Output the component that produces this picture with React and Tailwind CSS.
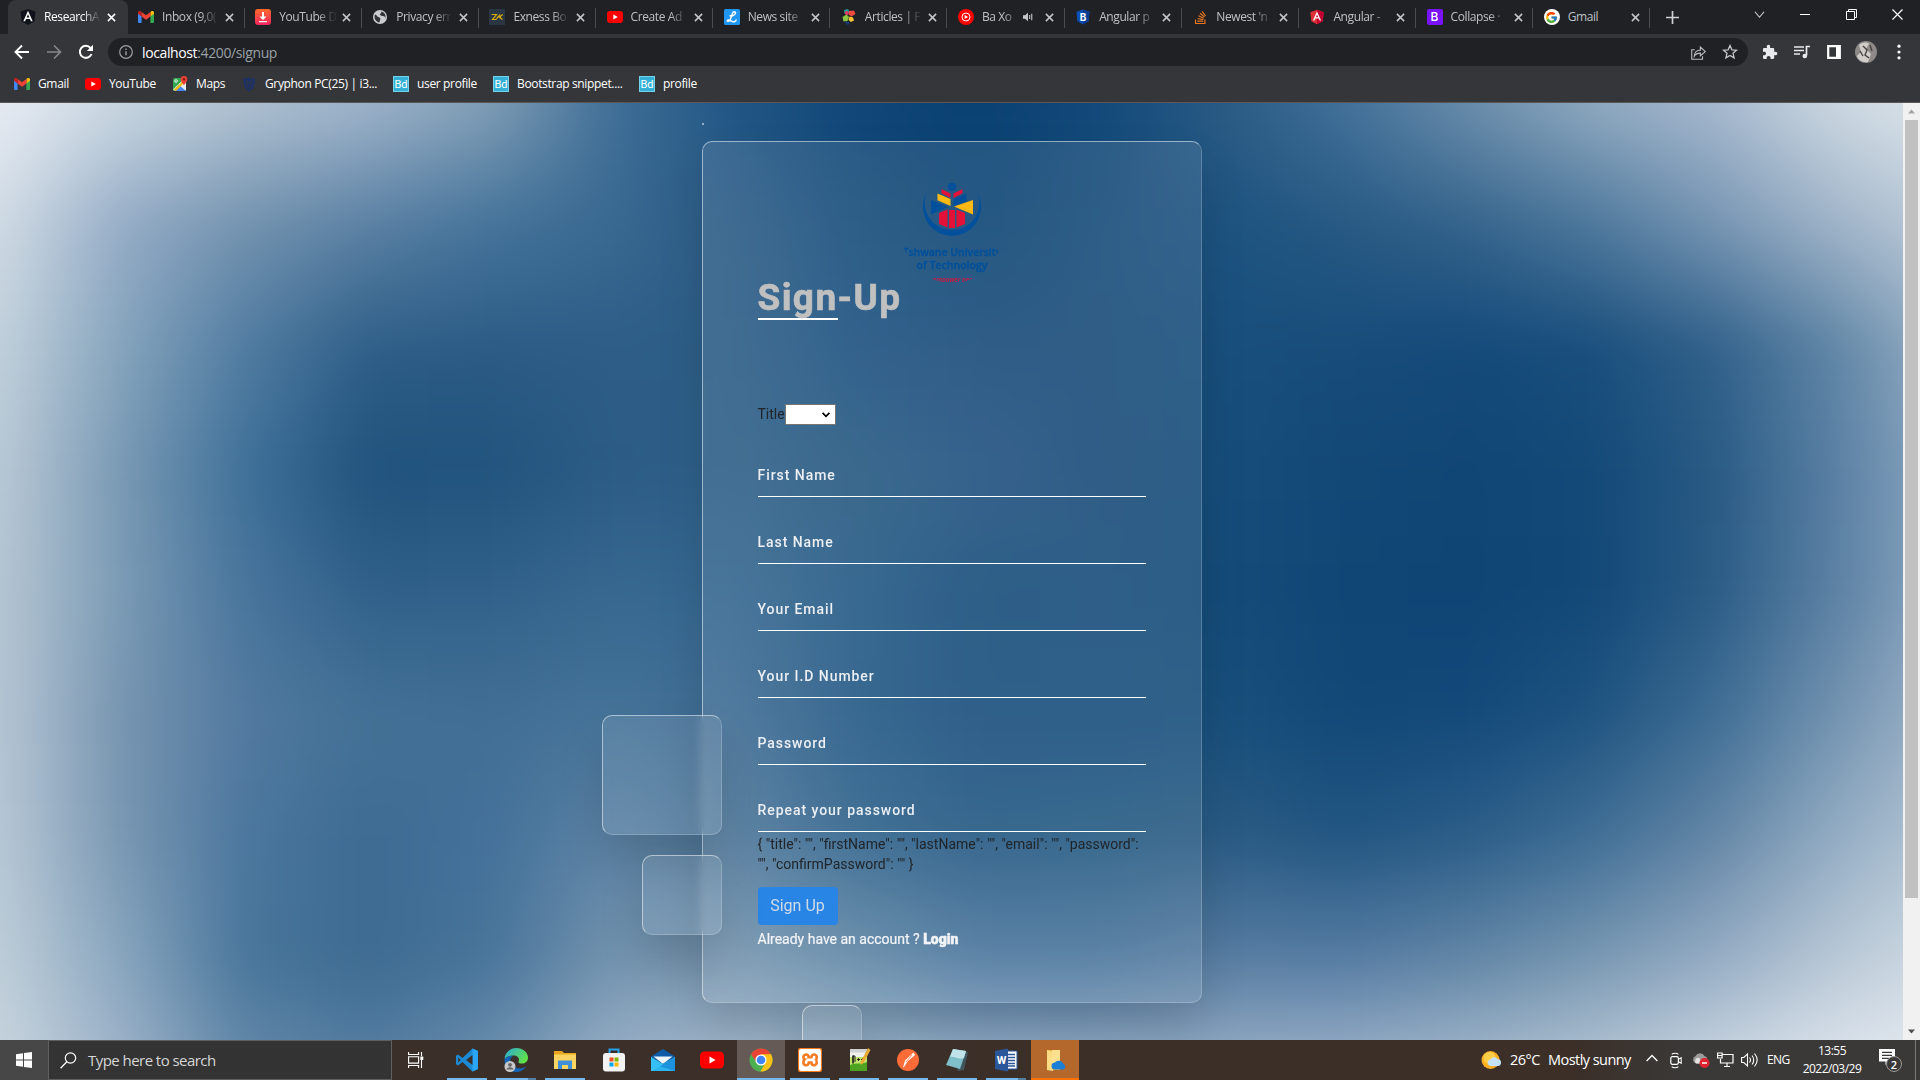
import React from "react";
import { FcGoogle } from "react-icons/fc";
import { FaStackOverflow } from "react-icons/fa";
import { SiXampp } from "react-icons/si";

const MESH = [
  ["#e8ecf4", "#c8d6e0", "#b0c1d1", "#9eb3ca", "#819eb6", "#406f97", "#205584", "#0f4578", "#0a4173", "#12497a", "#2a5b84", "#43719a", "#6a8dab", "#8fa9c0", "#a6b8ce", "#ccd8e1", "#dfe6ec"],
  ["#d0dbe4", "#94abc6", "#7292ae", "#5a80a3", "#44739a", "#396890", "#2a5b85", "#154c7a", "#0b4574", "#184c7a", "#1d5380", "#265983", "#34638b", "#4c779b", "#7594b2", "#9fb3c8", "#c0cedb"],
  ["#c2d1dc", "#84a3bc", "#507ba1", "#2e5e87", "#2c5b85", "#2e5e87", "#2c5d86", "#1b5080", "#184a7a", "#184b79", "#184f7c", "#184c7a", "#13497a", "#194e7c", "#30608a", "#6086a6", "#9fb4c9"],
  ["#bac9d6", "#7898b3", "#3e7098", "#1f527d", "#20537e", "#2c5c86", "#2e5f87", "#255880", "#205280", "#184a79", "#164d7a", "#124876", "#104675", "#134978", "#285a84", "#5a80a4", "#93adc5"],
  ["#b6c6d3", "#7a9ab4", "#48749c", "#306089", "#31618a", "#38688f", "#346690", "#225884", "#154c79", "#184d7b", "#144b79", "#0f4675", "#0f4575", "#124877", "#2a5b85", "#5c81a4", "#93adc5"],
  ["#b6c6d4", "#7694b0", "#52799f", "#437196", "#416e94", "#457399", "#3e6b93", "#215784", "#184e7c", "#174e7c", "#184f7b", "#124877", "#13497a", "#1e5380", "#3e6d94", "#7393b0", "#a4b7cc"],
  ["#b8c8d6", "#7896b1", "#4b769e", "#3d6b92", "#43719a", "#5d83a5", "#4c7699", "#2d618b", "#215681", "#235982", "#2a5b84", "#215581", "#2b5d88", "#3f6e95", "#6486a6", "#93adc4", "#b9c9d6"],
  ["#bfced9", "#88a5be", "#48759a", "#3d6b91", "#48749a", "#7393ae", "#7695b0", "#5f86a5", "#4a759d", "#49759c", "#587da2", "#567ca3", "#6286a6", "#7897b2", "#95acc4", "#b9c8d6", "#d3dde6"],
  ["#cbd7e0", "#a2b5cb", "#688cac", "#587fa3", "#7093b1", "#a0b5cc", "#adc0d1", "#a8bdd0", "#a4b8ce", "#a2b6cc", "#a2b6cc", "#a6b8ce", "#aec0d2", "#bccbd8", "#d2dce5", "#e4eaf1", "#eaeef4"],
];

const STEP = 122.45;
const SUB = 10;
const channels = (hex) => [1, 3, 5].map((k) => parseInt(hex.slice(k, k + 2), 16));
const MESH_RGB = MESH.map((row) => row.map(channels));

function meshBand(t) {
  const r = Math.min(Math.floor(t), MESH_RGB.length - 2);
  const f = t - r;
  const stops = MESH_RGB[r].map((a, i) => {
    const b = MESH_RGB[r + 1][i];
    const c = a.map((v, k) => Math.round(v + (b[k] - v) * f));
    return "rgb(" + c.join(",") + ") " + (200 + i * STEP) + "px";
  });
  return "linear-gradient(to right," + stops.join(",") + ")";
}

const BANDS = Array.from({ length: (MESH.length - 1) * SUB + 1 }, (_, i) => meshBand(i / SUB));

function GradientBackdrop() {
  return (
    <div className="absolute -left-[200px] -top-[106px] flex w-[2360px] flex-col blur-[22px]">
      {BANDS.map((g, i) => (
        <div key={i} className="h-[12.245px] shrink-0 first:h-[112px] last:h-[120px]" style={{ backgroundImage: g }} />
      ))}
    </div>
  );
}

/* ---------- favicons ---------- */
const GmailIcon = () => (
  <svg viewBox="0 0 16 12" className="h-3 w-4">
    <path d="M0 1.5V11a1 1 0 0 0 1 1h2.6V5z" fill="#4285f4" />
    <path d="M12.4 5v7H15a1 1 0 0 0 1-1V1.5z" fill="#34a853" />
    <path d="M12.4 1v4.5L16 2.8V1.5C16 0 14.300-.5 13.300.3z" fill="#fbbc04" />
    <path d="M3.600 5.500V1L8 4.300 12.400 1v4.500L8 8.800z" fill="#ea4335" />
    <path d="M0 1.500v1.300l3.600 2.700V1L2.700.3C1.700-.5 0 0 0 1.500z" fill="#c5221f" />
  </svg>
);
const YtIcon = () => (
  <svg viewBox="0 0 16 12" className="h-3 w-4">
    <rect width="16" height="12" rx="3" fill="#f00" />
    <path d="M6.300 3.400v5.200L10.800 6z" fill="#fff" />
  </svg>
);
const AngularDark = () => (
  <svg viewBox="0 0 16 16" className="size-4">
    <path d="M8 0l7.500 2.600-1.100 10L8 16l-6.400-3.400-1.100-10z" fill="#10131c" />
    <path d="M8 1.800L3.300 12.300h1.800l.9-2.300h4l.9 2.300h1.800zm1.400 6.700H6.600L8 5.200z" fill="#fff" />
  </svg>
);
const DownloadIcon = () => (
  <svg viewBox="0 0 16 16" className="size-4">
    <defs>
      <linearGradient id="dl" x2="0" y2="1"><stop stopColor="#ff6a2b" /><stop offset="1" stopColor="#f0265f" /></linearGradient>
    </defs>
    <rect width="16" height="16" rx="3" fill="url(#dl)" />
    <path d="M7 3h2v4.500h2.500L8 11 4.500 7.500H7zM4 12h8v1.300H4z" fill="#fff" />
  </svg>
);
const GlobeIcon = () => (
  <svg viewBox="0 0 16 16" className="size-4">
    <circle cx="8" cy="8" r="7" fill="#c9cccf" />
    <path d="M3 5.500C5 6 5 8 7.500 8.500 9 9 8 11 7.500 13.500 4 13 1.500 9.500 3 5.500zM8 2.500c2 0 1.500 2 .3 2.300C7 5.500 9 7 11 7c1.500 0 2.500 1 2 3 1.500-3 0-7.500-5-7.500z" fill="#303236" />
  </svg>
);
const ExnessIcon = () => (
  <svg viewBox="0 0 16 16" className="size-4">
    <rect width="16" height="16" fill="#2a3742" />
    <path d="M2.500 5.500h5L3.500 10.500H7L11 5.500M8 8h4M13.800 5.500l-3.600 2.500 3.300 2.500" stroke="#d9ac0c" strokeWidth="1.200" fill="none" />
  </svg>
);
const NewsIcon = () => (
  <svg viewBox="0 0 16 16" className="size-4">
    <rect width="16" height="16" rx="1.500" fill="#1f96f3" />
    <path d="M11.500 4.500C11.800 2.500 9.500 2.200 8.500 4.300 7.300 7 7.300 10 5.200 11.800c-1.300 1-2.500.2-1.500-.7 1.500-1.200 4 2.400 6.800 1.600 1.200-.4 1.700-1.300 1.700-2.200M5.800 6.200c.5 1.600 3.500 1 5.700-1.700" fill="none" stroke="#fff" strokeWidth="1.500" />
  </svg>
);
const PinwheelIcon = () => (
  <svg viewBox="0 0 16 16" className="size-4">
    <path d="M3 1l4-1 1.500 3L6 5.500 3.500 4.500z" fill="#17a398" />
    <path d="M8 2l5-.5 1.500 3.500-4 2.500-3-2z" fill="#f04a3e" />
    <circle cx="5.800" cy="4" r="1.900" fill="#e8356b" />
    <path d="M1.500 8l4-2.500L8 8l-1.500 4-4 .5z" fill="#8bc53f" />
    <path d="M8.500 7.500l3.500 1 1 3-3 1.500-2.500-2z" fill="#fbc531" />
    <path d="M3 12.500l5 .5 1 2-3 1z" fill="#163a6b" />
  </svg>
);
const YtMusic = () => (
  <svg viewBox="0 0 16 16" className="size-4">
    <circle cx="8" cy="8" r="8" fill="#f00" />
    <circle cx="8" cy="8" r="4" fill="none" stroke="#fff" strokeWidth="1" />
    <path d="M6.600 5.900v4.200L10.200 8z" fill="#fff" />
  </svg>
);
const BShield = () => (
  <svg viewBox="0 0 16 16" className="size-4">
    <path d="M8 .5l6.500 2.200-.8 9.300L8 15.500 2.300 12l-.8-9.300z" fill="#0b4fb3" />
    <path d="M8 .5l6.500 2.200-.8 9.300L8 15.500z" fill="#083d92" />
    <text x="8" y="11.500" textAnchor="middle" fontSize="10" fontWeight="700" fontFamily="Inter, sans-serif" fill="#fff">B</text>
  </svg>
);
const AngularRed = () => (
  <svg viewBox="0 0 16 16" className="size-4">
    <path d="M8 .8l6.700 2.400-1 9L8 15.300l-5.700-3.100-1-9z" fill="#dd3038" />
    <path d="M8 .8l6.700 2.400-1 9L8 15.300z" fill="#c3002f" />
    <path d="M8 2.500L3.900 11.600h1.500l.9-2h3.400l.9 2h1.500zm1.200 5.800H6.800L8 5.400z" fill="#fff" />
  </svg>
);
const BPurple = () => (
  <span className="flex size-4 items-center justify-center rounded-[2px] bg-[#7a12f8] font-[Inter,sans-serif] text-[12px] font-medium text-white">B</span>
);
const GoogleRound = () => (
  <span className="flex size-4 items-center justify-center rounded-full bg-white"><FcGoogle size={13} /></span>
);
const MapsIcon = () => (
  <svg viewBox="0 0 16 16" className="size-4">
    <rect x="1" y="2" width="13" height="13" rx="1.500" fill="#34a853" />
    <path d="M1 13.500L12 3l2 2v8.500a1.500 1.500 0 0 1-1.500 1.500h-10z" fill="#e8eaed" />
    <path d="M7 9l7 6H2z" fill="#4285f4" />
    <path d="M1.500 14L12 4l1.500 1.500L4 15z" fill="#fbbc04" />
    <path d="M12 0a3.300 3.300 0 0 0-3.300 3.300C8.700 6 12 9 12 9s3.300-3 3.300-5.700A3.300 3.300 0 0 0 12 0z" fill="#ea4335" />
    <circle cx="12" cy="3.300" r="1.200" fill="#8d1a12" />
    <circle cx="4" cy="5" r="1.300" fill="none" stroke="#fff" strokeWidth=".9" />
  </svg>
);
const GryphonIcon = () => (
  <svg viewBox="0 0 16 16" className="size-4">
    <path d="M2 2l2 1V1.500L6 3l2-2 2 2 2-1.500V3l2-1-.5 4 1 1-1.500 2-.5 3L8 15.500 4 12l-.5-3L2 7l1-1z" fill="#1c3266" />
    <path d="M5 5l3 2 3-2-1 5-2 3-2-3z" fill="none" stroke="#35363a" strokeWidth=".9" />
  </svg>
);
const BdIcon = () => (
  <span className="flex size-4 items-center justify-center border border-[#76d2ea] bg-[#35b1d6] font-[Roboto,sans-serif] text-[11px] leading-none text-white">Bd</span>
);

const TABS = [
  { icon: AngularDark, title: "ResearchA", active: true },
  { icon: GmailIcon, title: "Inbox (9,0(" },
  { icon: DownloadIcon, title: "YouTube D" },
  { icon: GlobeIcon, title: "Privacy err" },
  { icon: ExnessIcon, title: "Exness Bo" },
  { icon: YtIcon, title: "Create Ad" },
  { icon: NewsIcon, title: "News site" },
  { icon: PinwheelIcon, title: "Articles | F" },
  { icon: YtMusic, title: "Ba Xo", audio: true },
  { icon: BShield, title: "Angular p" },
  { icon: () => <FaStackOverflow size={15} color="#e8761f" />, title: "Newest 'n" },
  { icon: AngularRed, title: "Angular -" },
  { icon: BPurple, title: "Collapse ·" },
  { icon: GoogleRound, title: "Gmail", full: true },
];

const BOOKMARKS = [
  { icon: GmailIcon, label: "Gmail", w: "w-[71px]" },
  { icon: YtIcon, label: "YouTube", w: "w-[87px]" },
  { icon: MapsIcon, label: "Maps", w: "w-[69px]" },
  { icon: GryphonIcon, label: "Gryphon PC(25) | i3...", w: "w-[152px]" },
  { icon: BdIcon, label: "user profile", w: "w-[100px]" },
  { icon: BdIcon, label: "Bootstrap snippet....", w: "w-[146px]" },
  { icon: BdIcon, label: "profile", w: "w-[80px]" },
];

const CloseX = ({ color }) => (
  <svg viewBox="0 0 10 10" className="size-[9px] shrink-0"><path d="M1 1l8 8M9 1l-8 8" stroke={color} strokeWidth="1.700" /></svg>
);

function TabStrip() {
  return (
    <div className="flex h-[34px] bg-[#202124] pl-[8px]">
      {TABS.map(({ icon: Icon, title, active, audio, full }, i) => (
        <div key={i} className={active ? "flex h-[34px] w-[119.500px] shrink-0 items-center rounded-t-lg bg-[#35363a] pl-[12px]" : "relative flex h-[34px] w-[117.150px] shrink-0 items-center pl-[10.500px]"}>
          <span className="flex size-4 shrink-0 items-center justify-center"><Icon /></span>
          <span className={(active ? "text-white " : "text-[#bdc1c6] ") + (audio ? "w-[31px] " : "w-[57px] ") + (full ? "" : audio ? "[mask-image:linear-gradient(to_right,#000_70%,rgba(0,0,0,.4))] " : "[mask-image:linear-gradient(to_right,#000_68%,rgba(0,0,0,.12)_95%)] ") + "ml-2 whitespace-nowrap text-[12px] tracking-[-0.4px]"}>{title}</span>
          {audio && (
            <svg viewBox="0 0 12 12" className="ml-[10px] mr-[6px] size-[10px] shrink-0"><path d="M0 4h2.500L6 1v10L2.500 8H0z" fill="#c4c7ca" /><path d="M8 3.500v5M10.500 2v8" stroke="#c4c7ca" strokeWidth="1.300" /></svg>
          )}
          <span className="ml-[6px] flex"><CloseX color={active ? "#fff" : "#c4c7ca"} /></span>
          {!active && <span className="absolute right-0 top-2 h-5 w-px bg-[#4a4c50]" />}
        </div>
      ))}
      <div className="ml-[16px] flex items-center">
        <svg viewBox="0 0 14 14" className="size-[13px]"><path d="M7 0v14M0 7h14" stroke="#d0d2d5" strokeWidth="1.800" /></svg>
      </div>
      <div className="ml-auto flex h-7 items-center text-white">
        <svg viewBox="0 0 12 12" className="mr-[35px] size-[11px]"><path d="M1 3l5 6 5-6" fill="none" stroke="#d5d5d5" strokeWidth="1.200" /></svg>
        <svg viewBox="0 0 10 10" className="mr-[36px] size-[10px]"><path d="M0 5.500h10" stroke="#fff" /></svg>
        <svg viewBox="0 0 11 11" className="mr-[35px] size-[11px]"><path d="M.5 2.500h8v8h-8zM2.500 2.500v-2h8v8h-2" fill="none" stroke="#fff" /></svg>
        <svg viewBox="0 0 11 11" className="mr-[17px] size-[11px]"><path d="M.5.5l10 10M10.500.5l-10 10" stroke="#fff" strokeWidth="1.200" /></svg>
      </div>
    </div>
  );
}

function Toolbar() {
  return (
    <div className="flex h-9 items-center bg-[#35363a] pl-[14px]">
      <svg viewBox="0 0 16 16" className="size-4"><path d="M15 8H2M8 1.500L1.500 8 8 14.500" fill="none" stroke="#fff" strokeWidth="1.900" /></svg>
      <svg viewBox="0 0 16 16" className="ml-4 size-4"><path d="M1 8h13M8 1.500L14.500 8 8 14.500" fill="none" stroke="#85878a" strokeWidth="1.700" /></svg>
      <svg viewBox="0 0 16 16" className="ml-4 size-4"><path d="M13.500 10A6 6 0 1 1 12.500 4" fill="none" stroke="#fff" strokeWidth="2" /><path d="M15 .8V7H8.800z" fill="#fff" /></svg>
      <div className="ml-[14px] flex h-7 w-[1640px] items-center rounded-full bg-[#202124] pl-[11px] pr-[10px]">
        <svg viewBox="0 0 14 14" className="size-[14px]"><circle cx="7" cy="7" r="6.300" fill="none" stroke="#9aa0a6" strokeWidth="1.200" /><path d="M7 6.200v4M7 3.500V5" stroke="#9aa0a6" strokeWidth="1.400" /></svg>
        <span className="ml-[9px] text-[14px] tracking-[-0.38px] text-[#9aa0a6]"><span className="text-white">localhost</span>:4200/signup</span>
        <svg viewBox="0 0 16 16" className="ml-auto size-[15px]"><path d="M4 5H.800v10.200h11.500V12M3.500 12c0-4.500 3-6.500 6.500-6.500V2.200L15.200 7 10 11.500V8.700C7 8.700 5 9.500 3.500 12z" fill="none" stroke="#b9bcc0" strokeWidth="1.200" /></svg>
        <svg viewBox="0 0 16 16" className="ml-4 size-[16px]"><path d="M8 1.500l1.900 4.300 4.600.4-3.500 3.100 1.100 4.600L8 11.500l-4.100 2.400L5 9.300 1.500 6.200l4.600-.4z" fill="none" stroke="#c6c9cc" strokeWidth="1.300" /></svg>
      </div>
      <svg viewBox="0 0 16 16" className="ml-[14px] size-[16px]"><path d="M1 5.200C1 4.500 1.500 4 2.200 4H5c-.7-2 0-3.300 1.500-3.300S8.700 2 8 4h3c.7 0 1.200.5 1.200 1.200V8c2-.7 3.100.1 3.100 1.600s-1.100 2.200-3.100 1.500v2.700c0 .7-.5 1.200-1.200 1.200H8.500c.5-2-.5-3-1.900-3s-2.300 1-1.900 3H2.200C1.500 15 1 14.500 1 13.800v-2.600c2 .4 3-.4 3-1.700S3 7.500 1 8z" fill="#e8eaed" /></svg>
      <svg viewBox="0 0 16 16" className="ml-[16px] size-[16px]"><path d="M0 3h10M0 6.500h10M0 10h6M12.500 11.500V2.500H16" fill="none" stroke="#e8eaed" strokeWidth="1.700" /><circle cx="10.800" cy="12" r="2.300" fill="#e8eaed" /></svg>
      <svg viewBox="0 0 14 14" className="ml-[17px] size-[14px]"><path d="M1.200 1.200h11.600v11.600H1.200z" fill="none" stroke="#fff" strokeWidth="2.200" /><path d="M9 1h4v12H9z" fill="#fff" /></svg>
      <svg viewBox="0 0 22 22" className="ml-[14px] size-[22px]"><circle cx="11" cy="11" r="11" fill="#8d8a88" /><path d="M4 4c4-3 8-3 10-1l-3 5 5 5-3 8c-5 1-10-2-11-6l4-4z" fill="#cfccc9" /><path d="M8 5l4 4-2 5 4 3M15 4l2 6M5 10l3 5" stroke="#46423f" strokeWidth="1.400" fill="none" /></svg>
      <svg viewBox="0 0 4 16" className="ml-[20px] h-4 w-1"><circle cx="2" cy="2.200" r="1.600" fill="#fff" /><circle cx="2" cy="8" r="1.600" fill="#fff" /><circle cx="2" cy="13.800" r="1.600" fill="#fff" /></svg>
    </div>
  );
}

function Bookmarks() {
  return (
    <div className="flex h-[33px] items-center border-b border-[#5c5654] bg-[#35363a] pb-[4px] pl-[14px]">
      {BOOKMARKS.map(({ icon: Icon, label, w }, i) => (
        <div key={i} className={"flex shrink-0 items-center gap-2 " + w}>
          <Icon />
          <span className="-mt-px whitespace-nowrap text-[12px] tracking-[-0.35px] text-white">{label}</span>
        </div>
      ))}
    </div>
  );
}

function UniversityLogo() {
  return (
    <div className="mx-auto size-[100px] overflow-hidden rounded-full">
      <svg viewBox="0 0 100 100" className="size-[100px]">
        <circle cx="50" cy="3.800" r="4.300" fill="#00509c" />
        <path d="M24.500 10A29 29 0 1 0 75.500 10A27.300 27.300 0 1 1 24.500 10z" fill="#00509c" />
        <path d="M39.500 6l9 4.500V15l-9-4.800zM60.500 6l-9 4.500V15l9-4.800z" fill="#e31137" />
        <path d="M35.500 10.500L48.500 16v7l-13-5.800z" fill="#fdb913" />
        <path d="M64.500 10.500L51.500 16v7l13-4.500zM29 17l17 7-17 7.500z" fill="#00509c" />
        <path d="M71 17l-19 6.500L71 31.500z" fill="#fdb913" />
        <path d="M37 30l8.500-3.500V44.500L37 41zM47 27h6v18h-6zM54.500 26.500L63 30v11l-8.500 3.500z" fill="#e31137" />
        <g fontFamily="'Open Sans', sans-serif" fontWeight="600" fill="#00509c" stroke="#00509c" strokeWidth=".3" textAnchor="middle">
          <text x="50" y="72.500" fontSize="11.200" textLength="99" lengthAdjust="spacingAndGlyphs">Tshwane University</text>
          <text x="50" y="86" fontSize="11.200" textLength="71" lengthAdjust="spacingAndGlyphs">of Technology</text>
        </g>
        <text x="50" y="98.500" fontSize="7" fontFamily="'Open Sans', sans-serif" fontStyle="italic" fontWeight="600" fill="#e31137" textAnchor="middle" textLength="60" lengthAdjust="spacingAndGlyphs">We empower people</text>
      </svg>
    </div>
  );
}

const GLASS = "border border-white/50 border-r-white/20 border-b-white/20 bg-white/10 shadow-[0_25px_45px_rgba(0,0,0,0.13)] backdrop-blur-[5px] rounded-[10px]";

function SignUpCard() {
  return (
    <div className="relative mx-auto mt-[38px] h-[862px] w-[500px]">
      <div className={"h-full w-full px-[55px] pt-[41px] " + GLASS}>
        <UniversityLogo />
        <h2 className="-mt-[4px] h-[39px] text-[37px] font-bold leading-[38px] tracking-[1.4px] text-[#c0c0c0] [-webkit-text-stroke:0.6px_#c0c0c0]">Sign-Up</h2>
        <div className="h-[2px] w-20 bg-white" />
        <div className="mt-[84px] flex h-[21px] items-center text-[14px] text-[#212529]">
          <span className="w-[27.500px] whitespace-nowrap">Title</span>
          <div className="flex h-[21px] w-[51px] items-center justify-end border border-[#767676] bg-white pr-[4px]">
            <svg viewBox="0 0 10 7" className="h-[6px] w-[10px]"><path d="M1 1l4 4 4-4" fill="none" stroke="#000" strokeWidth="2" /></svg>
          </div>
        </div>
        <div className="mt-[5px]">
          {["First Name", "Last Name", "Your Email", "Your I.D Number", "Password", "Repeat your password"].map((l) => (
            <div key={l} className="flex h-[67px] items-end border-b border-white pb-[11px]">
              <span className="text-[14px] font-medium leading-[20px] tracking-[0.95px] text-[#eceff3]">{l}</span>
            </div>
          ))}
        </div>
        <p className="mt-[2px] whitespace-nowrap text-[14px] leading-[20px] text-[#212529]">
          {'{ "title": "", "firstName": "", "lastName": "", "email": "", "password":'}
          <br />
          {'"", "confirmPassword": "" }'}
        </p>
        <button className="mt-[13px] block h-[38px] w-20 rounded-[4px] bg-[#2884e5] text-[16px] text-[#cfdce8]">Sign Up</button>
        <p className="mt-[4px] whitespace-nowrap text-[14px] leading-[20px] text-[#f2f4f7] [-webkit-text-stroke:0.2px_#f2f4f7]">
          Already have an account ? <span className="font-black [-webkit-text-stroke:0.5px_#f2f4f7]">Login</span>
        </p>
      </div>
      <div className={"absolute -left-[100px] top-[574px] size-[120px] " + GLASS} />
      <div className={"absolute -left-[60px] top-[714px] size-20 " + GLASS} />
      <div className={"absolute left-[100px] top-[864px] size-[60px] " + GLASS} />
    </div>
  );
}

function Scrollbar() {
  return (
    <div className="flex w-[17px] flex-col items-center bg-[#f1f1f1]">
      <svg viewBox="0 0 17 17" className="size-[17px]"><path d="M5 10.500l3.500-4 3.500 4z" fill="#a3a3a3" /></svg>
      <div className="h-[778px] w-[13px] bg-[#c1c1c1]" />
      <svg viewBox="0 0 17 17" className="mt-auto size-[17px]"><path d="M5 6.500l3.500 4 3.500-4z" fill="#505050" /></svg>
    </div>
  );
}

/* ---------- taskbar icons ---------- */
const S = "size-6";
const APPS = [
  { run: true, el: <svg viewBox="0 0 24 24" className={S}><path d="M17.500.5L23 3v18l-5.500 2.500L7.500 14 3 17.500 1 16.300V7.700L3 6.500 7.500 10z" fill="#1d8ad6" /><path d="M17.500.5L23 3v18l-5.500 2.500z" fill="#2ba5f5" /><path d="M17.500 7v10L11 12z" fill="#3b3029" /><path d="M3.200 9.500v5L5.800 12z" fill="#3b3029" /></svg> },
  { run: true, split: true, el: <svg viewBox="0 0 24 24" className={S}><defs><linearGradient id="ed" x1="0" x2="1" y2=".5"><stop stopColor="#2aa8e0" /><stop offset="1" stopColor="#5fe04a" /></linearGradient></defs><path d="M.5 11C1 4.500 6 0 12.500 0 19 0 24 4.500 24 9.500c0 4-3 6-6 6-2.500 0-4-1-3.500-2 1.500-2.500-.5-6-5-6-4 0-7.500 1.500-9 3.500z" fill="url(#ed)" /><path d="M.5 11c1.500-2 5-3.500 8.500-3.300-3.500 2-3.500 7 0 10.300 3.500 3 9 3 13 .500C20 22 16 24 12 24 5 24 0 18 .5 11z" fill="#1264b4" /><circle cx="6" cy="18.500" r="5.500" fill="#c8c8c8" /><circle cx="6" cy="16.800" r="1.900" fill="#666" /><path d="M2.500 21.500c.5-3 6.500-3 7 0z" fill="#666" /></svg> },
  { run: true, el: <svg viewBox="0 0 24 24" className={S}><path d="M1 3h8l2 2h12v16H1z" fill="#e8a71b" /><path d="M1 6.500h22V21H1z" fill="#fcd462" /><path d="M5 21v-8.500h14V21h-4v-4H9v4z" fill="#3f8fd8" /></svg> },
  { el: <svg viewBox="0 0 24 24" className={S}><path d="M7.500 6V1.500h9V6" fill="none" stroke="#27a0ea" strokeWidth="2" /><rect x="1" y="5" width="22" height="18.500" rx="3" fill="#f3f3f3" /><path d="M7.500 9.500h4v4h-4z" fill="#f25022" /><path d="M12.500 9.500h4v4h-4z" fill="#7fba00" /><path d="M7.500 14.500h4v4h-4z" fill="#00a4ef" /><path d="M12.500 14.500h4v4h-4z" fill="#ffb900" /></svg> },
  { el: <svg viewBox="0 0 24 24" className={S}><path d="M0 8.500L12 1l12 7.500-12 8z" fill="#0f5ba8" /><path d="M2.500 8.500h19L12 16z" fill="#eef6fb" /><path d="M0 9l12 7 12-7v14H0z" fill="#2bb4f0" /><path d="M24 9L8 18l16 5z" fill="#1d93dd" /><path d="M0 9l12 7.500L2 23H0z" fill="#35c0f5" /></svg> },
  { el: <svg viewBox="0 0 24 24" className={S}><rect y="3.500" width="24" height="17" rx="4.500" fill="#f00" /><path d="M9.500 8.500v7l6-3.500z" fill="#fff" /></svg> },
  { run: true, bg: "bg-[#655a55]", full: true, el: <svg viewBox="0 0 24 24" className={S}><circle cx="12" cy="12" r="11.500" fill="#4caf50" /><path d="M2 6.300A11.500 11.500 0 0 1 22 6.300L12 7 7.500 14.500z" fill="#e94335" /><path d="M22 6.300A11.500 11.500 0 0 1 11.500 23.500L16.500 14 12 6.300z" fill="#fbc116" /><circle cx="12" cy="12" r="5.600" fill="#fff" /><circle cx="12" cy="12" r="4.300" fill="#4285f4" /></svg> },
  { run: true, el: <span className="flex size-6 items-center justify-center rounded-[2px] bg-[#f57c22]"><SiXampp size={22} color="#fff" /></span> },
  { run: true, el: <svg viewBox="0 0 24 24" className={S}><path d="M3 1h17v22H3z" fill="#f0f0ee" /><path d="M3 9h17v14H3z" fill="#c3e36a" /><path d="M3 17c6-3 11 0 17-3v9H3z" fill="#4da321" /><path d="M3 1h17v3.500H3z" fill="#cfd2d4" /><path d="M6 7.500v8" stroke="#222" strokeWidth="1.700" /><path d="M6 8h2v6M10 11.500h3M11.500 10v3M14 11.500h3M15.500 10v3" fill="none" stroke="#222" strokeWidth="1" /><path d="M21 0l2.500 2-7 13-3 2 .5-4z" fill="#e8ac35" /></svg> },
  { run: true, el: <svg viewBox="0 0 24 24" className={S}><circle cx="12" cy="12" r="11" fill="#ff6c37" /><path d="M17.500 4.500l1.500 2.500-7 6-4 6-1 .500 2-7z" fill="#fff" /><path d="M16 7l-6 7" stroke="#ff6c37" strokeWidth=".8" /></svg> },
  { run: true, el: <svg viewBox="0 0 24 24" className={S}><path d="M8 1l15 3-4 18-6 1z" fill="#40565c" /><path d="M8 1l13 2-6 18L1 17z" fill="#7fbfca" /><path d="M8 1l13 2-2 7C13 12 9 8 5 9z" fill="#bfe3e8" /></svg> },
  { run: true, split: true, el: <svg viewBox="0 0 24 24" className={S}><path d="M12 3h11v18H12z" fill="#fff" stroke="#2b579a" /><path d="M14 6.500h7M14 9.500h7M14 12.500h7M14 15.500h7M14 18h7" stroke="#2b579a" strokeWidth="1.300" /><path d="M1 3l13-2.500v23L1 21z" fill="#2b579a" /><text x="7.500" y="16" fontSize="11" fontWeight="700" fontFamily="Roboto, sans-serif" textAnchor="middle" fill="#fff">W</text></svg> },
  { run: true, bg: "bg-[#b4682c]", full: true, orange: true, el: <svg viewBox="0 0 24 24" className={S}><path d="M4 2h13v20H4z" fill="#eab73e" /><path d="M4 2l6 2v19l-6-1z" fill="#fbdc85" /><path d="M9 2h8v15H9z" fill="#fbe08f" /><path d="M12 21.500a3.500 3.500 0 0 1 0-7 5 5 0 0 1 8.500 1.500 3 3 0 0 1 0 5.500z" fill="#1b7fd6" /></svg> },
];

function Taskbar() {
  return (
    <div className="flex h-10 items-center bg-[linear-gradient(to_right,#3b3029_0%,#3b2f28_82%,#3a3938_88%)] font-['Open_Sans',sans-serif] text-white">
      <div className="flex h-10 w-12 items-center justify-center bg-[#474747]">
        <svg viewBox="0 0 16 16" className="size-4"><path d="M0 2.200L7 1.200v6.300H0zM8 1.100L16 0v7.500H8zM0 8.500h7v6.300l-7-1zM8 8.500h8V16l-8-1.100z" fill="#fff" /></svg>
      </div>
      <div className="flex h-10 w-[344px] items-center border border-[#5f5f5f] bg-[#333] pl-[11px]">
        <svg viewBox="0 0 17 17" className="size-[17px]"><circle cx="10.500" cy="6" r="5.200" fill="none" stroke="#fff" strokeWidth="1.200" /><path d="M6.800 9.800L.6 16.200" stroke="#fff" strokeWidth="1.300" /></svg>
        <span className="ml-[11px] text-[15px] tracking-[-0.55px] text-[#d6d6d6]">Type here to search</span>
      </div>
      <div className="flex w-[50px] justify-center pr-[2px]">
        <svg viewBox="0 0 16 16" className="size-4"><path d="M.6 0v2.500h10V0M.600 16v-2.500h10V16M.6 4.800h10v6.300H.6zM13.500 0v4M13.500 8v8" fill="none" stroke="#fff" strokeWidth="1.100" /><path d="M12.300 4.500h3V8h-3z" fill="#fff" /></svg>
      </div>
      {APPS.map((a, i) => (
        <div key={i} className="flex h-10 w-[49px] justify-center">
          <div className={"relative flex h-10 w-12 items-center justify-center " + (a.bg || "")}>
            {a.el}
            {a.run && (
              <span className={"absolute bottom-0 flex h-[2px] " + (a.full ? "w-12 " : "w-10 ") + (a.orange ? "bg-[#ff7200]" : "bg-[#76b9ed]")}>
                {a.split && <span className="ml-auto h-[2px] w-2 bg-[#547fa3]" />}
              </span>
            )}
          </div>
        </div>
      ))}
      <div className="ml-auto flex items-center">
        <svg viewBox="0 0 20 20" className="size-5"><circle cx="9.500" cy="10" r="9" fill="#fbb022" /><circle cx="8.500" cy="8" r="6" fill="#fdd04c" /><path d="M9.500 16a3.300 3.300 0 0 1 0-6.500 4 4 0 0 1 7-.5 3.500 3.500 0 0 1 0 7z" fill="#c4e2fb" /></svg>
        <span className="ml-[9px] w-[38px] whitespace-nowrap text-[14.500px] tracking-[-0.5px]">26°C</span>
        <span className="w-[98px] whitespace-nowrap text-[14.500px] tracking-[-0.55px]">Mostly sunny</span>
      </div>
      <div className="flex items-center">
        <svg viewBox="0 0 12 8" className="mt-[-4px] h-[8px] w-3"><path d="M.6 7L6 1.500 11.400 7" fill="none" stroke="#fff" strokeWidth="1.300" /></svg>
        <svg viewBox="0 0 14 18" className="ml-[11px] h-[17px] w-[14px]"><rect x="1.500" y="5" width="8" height="8" rx="1.500" fill="none" stroke="#fff" strokeWidth="1.300" /><path d="M9.500 8l3-2v6l-3-2M2.500 2.500c1.500-1.500 5.500-1.500 7 0M2.500 15.500c1.500 1.500 5.500 1.500 7 0" fill="none" stroke="#fff" strokeWidth="1.100" /></svg>
        <svg viewBox="0 0 18 16" className="ml-[9px] h-4 w-[18px]"><path d="M4 11.500A4 4 0 0 1 3.500 4 5 5 0 0 1 12.500 4 4 4 0 0 1 13 11.500z" fill="#9b9b9b" /><path d="M4 11.500A3.500 3.500 0 0 1 5 6c2-1 4 1 4 5.500z" fill="#e3e3e3" /><circle cx="12.500" cy="11" r="5" fill="#e02330" /><path d="M10 11h5" stroke="#fff" strokeWidth="1.500" /></svg>
        <svg viewBox="0 0 17 16" className="ml-[7px] h-4 w-[17px]"><path d="M5 2.500h11v8.500H3.500V7M7 14.500h6M10 11v3.500M.6 1h4.500v5H.600zM.6 3.500h4" fill="none" stroke="#fff" strokeWidth="1.200" /></svg>
        <svg viewBox="0 0 17 16" className="ml-[7px] h-4 w-[17px]"><path d="M.6 5.500h2.200L6.500 2v12L2.800 10.500H.6z" fill="none" stroke="#fff" strokeWidth="1.100" /><path d="M8.500 5.500c1.200 1.500 1.200 3.500 0 5M11 3.500c2.300 2.500 2.300 6.500 0 9M13.500 1.500c3.300 4 3.300 9 0 13" fill="none" stroke="#fff" strokeWidth="1.100" /></svg>
        <span className="ml-[9px] w-[24px] whitespace-nowrap text-[12px] tracking-[-0.6px]">ENG</span>
        <div className="ml-[10px] flex w-[62px] flex-col items-center whitespace-nowrap text-[12px] leading-[18px] tracking-[-0.5px]"><span>13:55</span><span>2022/03/29</span></div>
        <div className="relative ml-[16px] h-6 w-[24px]">
          <svg viewBox="0 0 16 16" className="mt-[1px] size-4"><path d="M0 0h16v12.500h-6L6.500 16v-3.500H0z" fill="#fff" /><path d="M3 3.300h10M3 6.300h10M3 9.300h7" stroke="#3a3938" strokeWidth="1.200" /></svg>
          <span className="absolute left-[7px] top-[8px] flex size-4 items-center justify-center rounded-full border border-[#9a9a9a] bg-[#3a3938] text-[11px] font-semibold leading-none">2</span>
        </div>
        <span className="ml-[12px] mr-[4px] h-10 w-px bg-[#7a7a7a]" />
      </div>
    </div>
  );
}

export default function App() {
  return (
    <div className="flex h-[1080px] w-[1920px] flex-col overflow-hidden bg-[#202124] font-['Open_Sans',sans-serif]">
      <TabStrip />
      <Toolbar />
      <Bookmarks />
      <div className="flex h-[937px]">
        <main className="relative w-[1903px] overflow-hidden font-[Roboto,sans-serif]">
          <GradientBackdrop />
          <div className="absolute left-[702px] top-5 size-[2px] bg-white/50" />
          <div className="relative flex">
            <SignUpCard />
          </div>
        </main>
        <Scrollbar />
      </div>
      <Taskbar />
    </div>
  );
}
